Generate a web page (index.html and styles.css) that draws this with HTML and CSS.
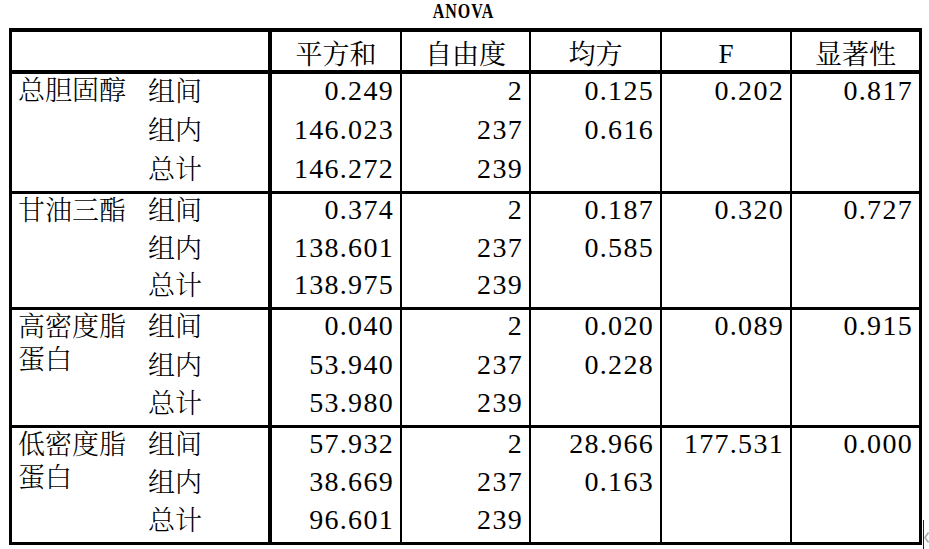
FILE: index.html
```html
<!DOCTYPE html>
<html lang="zh-CN">
<head>
<meta charset="utf-8">
<title>ANOVA</title>
<link rel="stylesheet" href="styles.css">
</head>
<body>
<div class="sheet">
  <div class="title"><span class="title-text">ANOVA</span></div>
  <table class="anova">
    <colgroup>
      <col class="c-var"><col class="c-src"><col class="c-ss"><col class="c-df"><col class="c-ms"><col class="c-f"><col class="c-sig">
    </colgroup>
    <thead>
      <tr>
        <th colspan="2" class="h-blank"></th>
        <th class="cjk">平方和</th>
        <th class="cjk">自由度</th>
        <th class="cjk">均方</th>
        <th class="latin">F</th>
        <th class="cjk last">显著性</th>
      </tr>
    </thead>
    <tbody class="g1">
      <tr>
        <td rowspan="3" class="var"><div class="var-text">总胆固醇</div></td>
        <td class="src">组间</td><td class="num">0.249</td><td class="num">2</td><td class="num">0.125</td><td class="num">0.202</td><td class="num last">0.817</td>
      </tr>
      <tr>
        <td class="src">组内</td><td class="num">146.023</td><td class="num">237</td><td class="num">0.616</td><td class="num"></td><td class="num last"></td>
      </tr>
      <tr>
        <td class="src">总计</td><td class="num">146.272</td><td class="num">239</td><td class="num"></td><td class="num"></td><td class="num last"></td>
      </tr>
    </tbody>
    <tbody class="g2">
      <tr>
        <td rowspan="3" class="var"><div class="var-text">甘油三酯</div></td>
        <td class="src">组间</td><td class="num">0.374</td><td class="num">2</td><td class="num">0.187</td><td class="num">0.320</td><td class="num last">0.727</td>
      </tr>
      <tr>
        <td class="src">组内</td><td class="num">138.601</td><td class="num">237</td><td class="num">0.585</td><td class="num"></td><td class="num last"></td>
      </tr>
      <tr>
        <td class="src">总计</td><td class="num">138.975</td><td class="num">239</td><td class="num"></td><td class="num"></td><td class="num last"></td>
      </tr>
    </tbody>
    <tbody class="g3">
      <tr>
        <td rowspan="3" class="var"><div class="var-text">高密度脂蛋白</div></td>
        <td class="src">组间</td><td class="num">0.040</td><td class="num">2</td><td class="num">0.020</td><td class="num">0.089</td><td class="num last">0.915</td>
      </tr>
      <tr>
        <td class="src">组内</td><td class="num">53.940</td><td class="num">237</td><td class="num">0.228</td><td class="num"></td><td class="num last"></td>
      </tr>
      <tr>
        <td class="src">总计</td><td class="num">53.980</td><td class="num">239</td><td class="num"></td><td class="num"></td><td class="num last"></td>
      </tr>
    </tbody>
    <tbody class="g4">
      <tr>
        <td rowspan="3" class="var"><div class="var-text">低密度脂蛋白</div></td>
        <td class="src">组间</td><td class="num">57.932</td><td class="num">2</td><td class="num">28.966</td><td class="num">177.531</td><td class="num last">0.000</td>
      </tr>
      <tr>
        <td class="src">组内</td><td class="num">38.669</td><td class="num">237</td><td class="num">0.163</td><td class="num"></td><td class="num last"></td>
      </tr>
      <tr>
        <td class="src">总计</td><td class="num">96.601</td><td class="num">239</td><td class="num"></td><td class="num"></td><td class="num last"></td>
      </tr>
    </tbody>
  </table>
</div>
<div class="cursor-line"></div>
<svg class="cursor-chevron" width="7" height="15" viewBox="0 0 7 15" aria-hidden="true">
  <polyline points="5.5,2.5 2,7.5 5.5,12.5" fill="none" stroke="#a8a8a8" stroke-width="1.6"/>
</svg>
</body>
</html>
```
FILE: styles.css
```css
html, body {
  margin: 0;
  padding: 0;
  background: #ffffff;
  color: #000000;
}

body {
  position: relative;
  width: 929px;
  height: 549px;
  overflow: hidden;
  font-family: "Liberation Serif", "Noto Serif CJK SC", "Noto Sans CJK SC", serif;
}

.sheet {
  margin-left: 9px;
  width: 913px;
}

.title {
  height: 28px;
  display: flex;
  justify-content: center;
  align-items: flex-start;
  padding-right: 4px;
}

.title-text {
  display: inline-block;
  font-family: "Liberation Serif", serif;
  font-weight: bold;
  font-size: 16px;
  letter-spacing: 1px;
  line-height: 22px;
  transform: scaleY(1.35);
  transform-origin: 50% 50%;
}

.anova {
  border-collapse: separate;
  border-spacing: 0;
  table-layout: fixed;
  box-sizing: border-box;
  width: 913px;
  border: 3px solid #000;
  border-top-width: 4px;
}

.c-var { width: 130px; }
.c-src { width: 130px; }
.c-ss  { width: 130px; }
.c-df  { width: 129px; }
.c-ms  { width: 131px; }
.c-f   { width: 130px; }
.c-sig { width: 127px; }

.anova th,
.anova td {
  box-sizing: border-box;
  padding: 0;
  white-space: nowrap;
  line-height: 28px;
}

/* header */
.anova thead tr { height: 42px; }

.anova th {
  border-bottom: 4px solid #000;
  border-right: 2px solid #000;
  text-align: center;
  vertical-align: middle;
  font-weight: normal;
}

.anova th.h-blank { border-right-width: 4px; }
.anova th.last { border-right: none; }

.cjk {
  font-family: "Noto Serif CJK SC", "Noto Sans CJK SC", sans-serif;
  font-size: 27px;
  font-weight: 300;
}

.anova th.cjk { padding-top: 3px; }

.anova th.latin {
  font-family: "Liberation Serif", serif;
  font-size: 27px;
  padding-top: 6px;
}

/* body cells */
.anova td.var {
  vertical-align: top;
  white-space: normal;
  padding: 0 6px;
  font-family: "Noto Serif CJK SC", "Noto Sans CJK SC", sans-serif;
  font-size: 27px;
  font-weight: 300;
  line-height: 33px;
}

.var-text { margin-top: -2px; }

.anova td.src {
  border-right: 4px solid #000;
  padding-left: 6px;
  padding-bottom: 8px;
  vertical-align: middle;
  font-family: "Noto Serif CJK SC", "Noto Sans CJK SC", sans-serif;
  font-size: 27px;
  font-weight: 300;
}

.anova td.num {
  border-right: 2px solid #000;
  text-align: right;
  vertical-align: middle;
  padding-right: 6px;
  padding-bottom: 6px;
  font-family: "Liberation Serif", serif;
  font-size: 28px;
  letter-spacing: 1.3px;
}

.anova td.num.last { border-right: none; }

/* group separators */
.anova tbody:not(:last-child) tr:last-child td,
.anova tbody:not(:last-child) td.var {
  border-bottom: 3px solid #000;
}

/* row heights per block */
.g1 tr { height: 39px; }
.g1 tr:last-child { height: 42px; }

.g2 tr { height: 38px; }
.g2 tr:nth-child(2) { height: 37px; }
.g2 tr:last-child { height: 41px; }

.g3 tr { height: 38px; }
.g3 tr:nth-child(2) { height: 39px; }
.g3 tr:last-child { height: 41px; }

.g4 tr { height: 38px; }

/* stray cursor marks at the bottom-right edge */
.cursor-line {
  position: absolute;
  left: 923px;
  top: 520px;
  width: 1px;
  height: 29px;
  background: #222;
}

.cursor-chevron {
  position: absolute;
  left: 923px;
  top: 530px;
}
```
